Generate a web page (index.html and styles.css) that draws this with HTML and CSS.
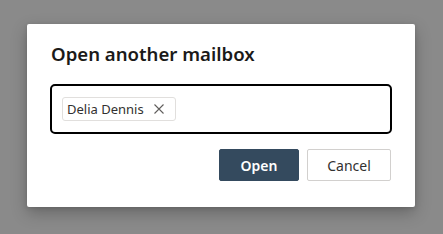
FILE: index.html
```html
<!DOCTYPE html>
<html>
<head>
<meta charset="utf-8">
<link rel="stylesheet" href="styles.css">
</head>
<body>
<div class="dialog">
  <h1 class="title">Open another mailbox</h1>
  <div class="picker">
    <span class="chip">
      <span class="chip-name">Delia Dennis</span>
      <svg class="chip-x" width="12" height="12" viewBox="0 0 12 12"><path d="M1.5 1.5L10.5 10.5M10.5 1.5L1.5 10.5" stroke="#605e5c" stroke-width="1.1" fill="none"/></svg>
    </span>
  </div>
  <div class="actions">
    <button class="btn btn-primary">Open</button>
    <button class="btn btn-default">Cancel</button>
  </div>
</div>
</body>
</html>
```

FILE: styles.css
```css
html, body {
  margin: 0;
  padding: 0;
  background: #8a8a8a;
  width: 443px;
  height: 234px;
  overflow: hidden;
}
body {
  font-family: "Noto Sans", "Open Sans", sans-serif;
  color: #201f1e;
}
.dialog {
  box-sizing: border-box;
  margin: 24px 0 0 27px;
  width: 388px;
  height: 183px;
  background: #fff;
  border-radius: 2px;
  box-shadow: 0 6px 16px rgba(0, 0, 0, 0.25), 0 1px 4px rgba(0, 0, 0, 0.12);
  padding: 16px 23px 24px 23px;
  display: flex;
  flex-direction: column;
}
.title {
  margin: 0 0 0 1px;
  font-size: 18.6px;
  font-weight: 600;
  line-height: 28px;
  color: #1b1a19;
}
.picker {
  box-sizing: border-box;
  margin-top: 16px;
  height: 50px;
  border: 2px solid #000;
  border-radius: 5px;
  display: flex;
  align-items: center;
  padding: 0 10px;
}
.chip {
  box-sizing: border-box;
  height: 24px;
  display: flex;
  align-items: center;
  border: 1px solid #e1dfdd;
  border-radius: 3px;
  padding: 0 10px 0 4px;
  gap: 9px;
}
.chip-name {
  font-size: 13px;
  color: #323130;
}
.chip-x {
  display: block;
}
.actions {
  margin-top: 15px;
  display: flex;
  justify-content: flex-end;
  gap: 8px;
  padding-right: 1px;
}
.btn {
  box-sizing: border-box;
  height: 32px;
  border-radius: 2px;
  font-family: inherit;
  font-size: 14px;
  font-weight: 600;
  padding: 0;
  cursor: pointer;
}
.btn-primary {
  width: 80px;
  background: #344a5e;
  border: 1px solid #344a5e;
  color: #fff;
}
.btn-default {
  width: 84px;
  background: #fff;
  border: 1px solid #d2d0ce;
  color: #323130;
  font-weight: 400;
}
```
